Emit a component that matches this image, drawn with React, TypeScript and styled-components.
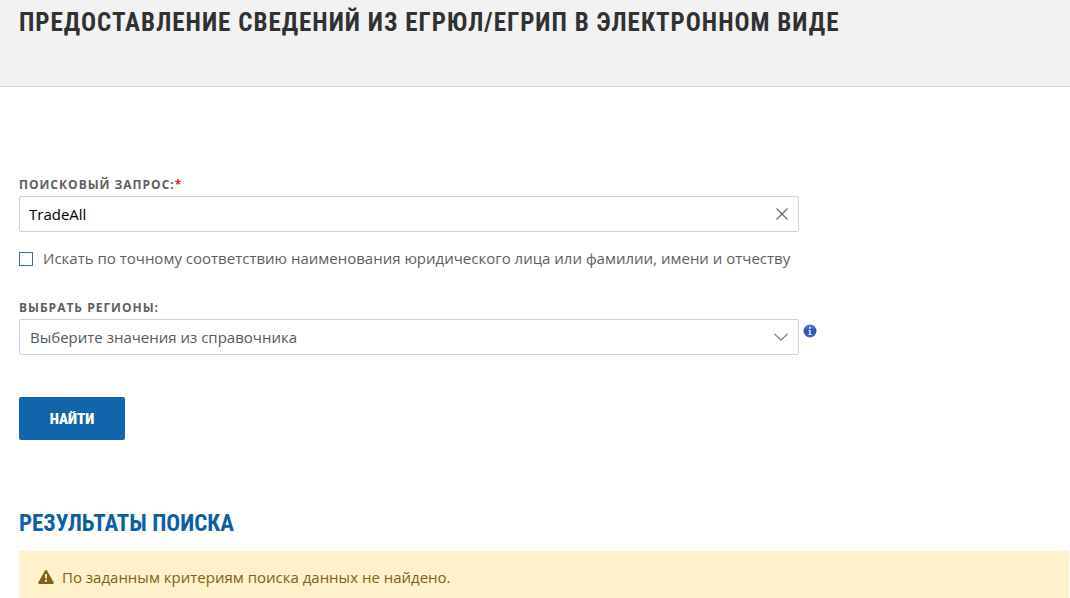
import React, { useState } from "react";
import styled, { createGlobalStyle } from "styled-components";

const GlobalStyle = createGlobalStyle`
  *, *::before, *::after { box-sizing: border-box; }
  body {
    margin: 0;
    background: #fff;
    color: #5e5e5e;
    font: 15px/24px "Open Sans", "Noto Sans", sans-serif;
  }
`;

const display = `"Liberation Sans Narrow", "Roboto Condensed", "Liberation Sans", sans-serif`;

const Header = styled.header`
  height: 87px;
  padding: 7px 19px 0;
  background: #f2f2f2;
  border-bottom: 1px solid #d9d9d9;
`;

const Title = styled.h1`
  margin: 0;
  color: #2f3133;
  font: bold 25px/32px ${display};
  letter-spacing: 1px;
  text-transform: uppercase;
`;

const Main = styled.main`
  padding: 89px 1px 0 19px;
`;

const Form = styled.form`
  display: flex;
  flex-direction: column;
  align-items: flex-start;
`;

const Field = styled.div`
  width: 100%;
`;

const Label = styled.label`
  display: block;
  height: 20px;
  font-size: 12px;
  line-height: 18px;
  font-weight: 700;
  letter-spacing: 1px;
  text-transform: uppercase;
`;

const Required = styled.span`
  color: #e02020;
`;

const ControlRow = styled.div`
  display: flex;
  align-items: flex-start;
  gap: 4px;
`;

const Control = styled.div`
  display: flex;
  align-items: center;
  width: 100%;
  max-width: 780px;
  height: 36px;
  border: 1px solid #cfd2d4;
  border-radius: 2px;
  background: #fff;
`;

const TextInput = styled.input`
  flex: 1;
  min-width: 0;
  height: 100%;
  padding: 0 9px;
  border: 0;
  outline: 0;
  background: transparent;
  color: #000;
  font: inherit;
`;

const ClearButton = styled.button`
  display: flex;
  align-items: center;
  justify-content: center;
  width: 32px;
  height: 34px;
  padding: 0;
  border: 0;
  background: transparent;
  color: #6b6b6b;
  cursor: pointer;
`;

const Select = styled.select`
  flex: 1;
  min-width: 0;
  height: 100%;
  margin-right: -34px;
  padding: 0 34px 0 10px;
  border: 0;
  outline: 0;
  appearance: none;
  background: transparent;
  color: #555a5c;
  font: inherit;
`;

const Chevron = styled.svg`
  flex: none;
  width: 34px;
  height: 10px;
  pointer-events: none;
`;

const HelpButton = styled.button`
  display: flex;
  margin-top: 5px;
  padding: 0;
  border: 0;
  background: transparent;
  cursor: pointer;
`;

const CheckRow = styled.label`
  display: flex;
  align-items: flex-start;
  gap: 10px;
  margin: 14px 0 29px;
  cursor: pointer;
`;

const Checkbox = styled.input`
  flex: none;
  width: 14px;
  height: 14px;
  margin: 6px 0 0;
  appearance: none;
  border: 1px solid #3f6f96;
  background: #fff;
  &:checked { background: #1265aa; }
`;

const SubmitButton = styled.button`
  width: 106px;
  height: 43px;
  margin-top: 42px;
  padding: 0;
  border: 0;
  border-radius: 2px;
  background: #1265aa;
  color: #fff;
  font: 900 15px/20px ${display};
  text-transform: uppercase;
  cursor: pointer;
`;

const ResultsTitle = styled.h2`
  margin: 67px 0 11px;
  color: #0b60a3;
  font: bold 23px/33px ${display};
  text-transform: uppercase;
`;

const Alert = styled.div`
  display: flex;
  align-items: center;
  gap: 8px;
  padding: 14px 19px;
  border-radius: 2px;
  background: #fef1cb;
  color: #7d6318;
`;

export default function App() {
  const [query, setQuery] = useState("TradeAll");
  return (
    <>
      <GlobalStyle />
      <Header>
        <Title>Предоставление сведений из ЕГРЮЛ/ЕГРИП в электронном виде</Title>
      </Header>
      <Main>
        <Form onSubmit={(e) => e.preventDefault()}>
          <Field>
            <Label htmlFor="query">
              Поисковый запрос:<Required>*</Required>
            </Label>
            <Control>
              <TextInput
                id="query"
                type="text"
                value={query}
                onChange={(e) => setQuery(e.target.value)}
              />
              <ClearButton type="button" aria-label="Очистить" onClick={() => setQuery("")}>
                <svg width="12" height="12" viewBox="0 0 12 12" fill="none" stroke="currentColor" strokeWidth="1.3">
                  <path d="M.5.5l11 11M11.5.5l-11 11" />
                </svg>
              </ClearButton>
            </Control>
          </Field>
          <CheckRow htmlFor="exact">
            <Checkbox id="exact" type="checkbox" />
            <span>Искать по точному соответствию наименования юридического лица или фамилии, имени и отчеству</span>
          </CheckRow>
          <Field>
            <Label htmlFor="regions">Выбрать регионы:</Label>
            <ControlRow>
              <Control>
                <Select id="regions" defaultValue="">
                  <option value="">Выберите значения из справочника</option>
                </Select>
                <Chevron viewBox="0 0 34 10" fill="none" stroke="#7290a8" strokeWidth="1.4" aria-hidden="true">
                  <path d="M10.500 2l6.500 6 6.500-6" />
                </Chevron>
              </Control>
              <HelpButton type="button" aria-label="Справка">
                <svg width="14" height="14" viewBox="0 0 14 14">
                  <defs>
                    <linearGradient id="ball" x1="0" y1="0" x2="0" y2="1">
                      <stop offset="0" stopColor="#5b7bd6" />
                      <stop offset="0.5" stopColor="#2c50bd" />
                      <stop offset="1" stopColor="#3e68d8" />
                    </linearGradient>
                  </defs>
                  <circle cx="7" cy="7" r="6.500" fill="url(#ball)" />
                  <circle cx="7" cy="3.900" r="1.100" fill="#dfe6fb" />
                  <path d="M5.500 6h2.300v4h.9v1H5.400v-1h.9V7h-.8z" fill="#dfe6fb" />
                </svg>
              </HelpButton>
            </ControlRow>
          </Field>
          <SubmitButton type="submit">Найти</SubmitButton>
        </Form>
        <ResultsTitle>Результаты поиска</ResultsTitle>
        <Alert role="status">
          <svg width="16" height="14" viewBox="0 0 16 14" aria-hidden="true">
            <path d="M8 0c.5 0 .8.200 1 .600l6.600 11.700c.4.800 0 1.700-.9 1.700H1.300c-.9 0-1.300-.9-.9-1.700L7 .600C7.200.200 7.500 0 8 0z" fill="#7d6318" />
            <path d="M6.900 4.300h2.200l-.3 4.200H7.200zM7 9.700h2v2H7z" fill="#fef1cb" />
          </svg>
          <span>По заданным критериям поиска данных не найдено.</span>
        </Alert>
      </Main>
    </>
  );
}
